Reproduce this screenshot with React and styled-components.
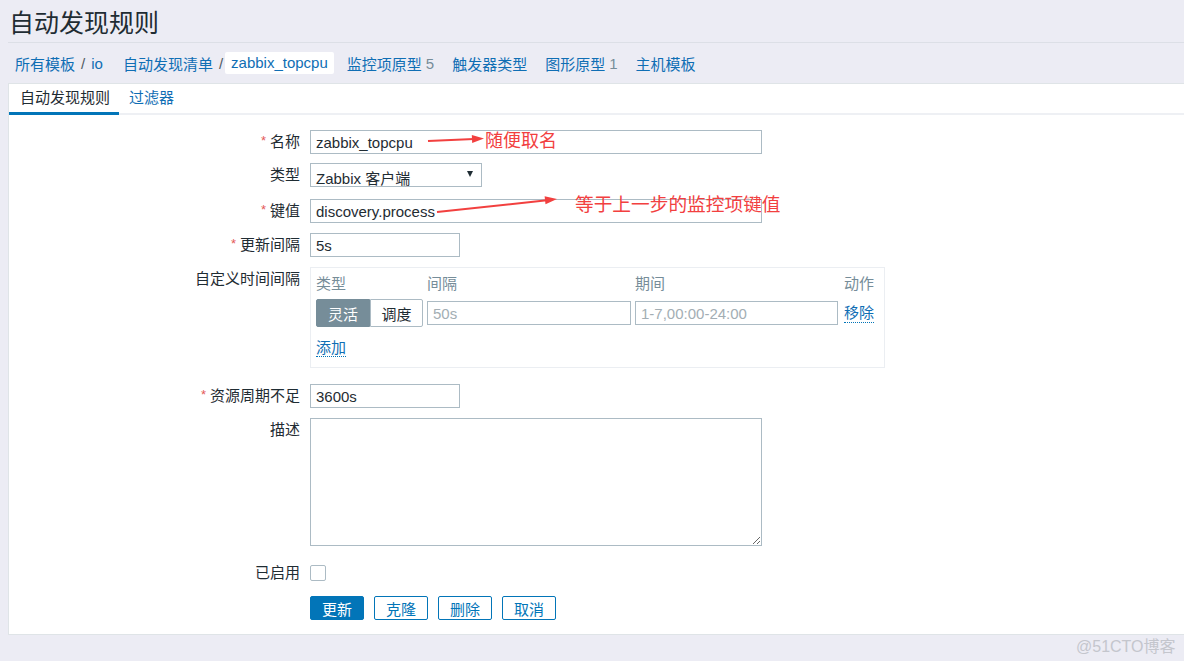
import React from "react";
import styled, { createGlobalStyle } from "styled-components";

const GlobalStyle = createGlobalStyle`
	html, body {
		margin: 0;
		padding: 0;
	}
	body {
		background: #ececf4;
		color: #1f2c33;
		font-family: "Liberation Sans", Arial, "Noto Sans CJK SC", sans-serif;
		font-size: 15px;
	}
`;

const Page = styled.div`
	box-sizing: border-box;
	height: 661px;
	overflow: hidden;
	padding-left: 8px;
	position: relative;
	width: 1184px;
`;

const Header = styled.header`
	align-items: center;
	border-bottom: 1px solid #dcdfe6;
	display: flex;
	height: 42px;
	padding-left: 1px;
`;

const Title = styled.h1`
	font-size: 25px;
	font-weight: normal;
	margin: 0;
`;

const Crumbs = styled.nav`
	align-items: center;
	display: flex;
	height: 40px;
	padding-left: 7px;
`;

const CrumbGroup = styled.div`
	align-items: center;
	display: flex;
	margin-right: ${({ $gap }) => $gap ?? 18}px;
`;

const CrumbLink = styled.a`
	color: #0f6eb4;
	cursor: pointer;
	text-decoration: none;
`;

const CrumbCurrent = styled.span`
	background: #ffffff;
	border-radius: 2px;
	color: #0f6eb4;
	height: 22px;
	line-height: 22px;
	padding: 0 6px;
`;

const Sep = styled.span`
	color: #4f5b62;
	padding: 0 ${({ $right }) => $right ?? 6}px 0 6px;
`;

const Count = styled.span`
	color: #768d99;
	margin-left: 4px;
`;

const Panel = styled.section`
	background: #ffffff;
	border: 1px solid #dfe4e7;
	border-right: none;
`;

const TabBar = styled.div`
	border-bottom: 2px solid #eef0f4;
	display: flex;
`;

const Tab = styled.div`
	border-bottom: 3px solid ${({ $active }) => ($active ? "#0275b8" : "transparent")};
	color: ${({ $active }) => ($active ? "#1f2c33" : "#0f6eb4")};
	height: 28px;
	line-height: 28px;
	margin-bottom: -2px;
	padding: ${({ $first }) => ($first ? "0 9px 0 11px" : "0 10px")};
`;

const Form = styled.div`
	padding: 15px 0 14px;
`;

const Row = styled.div`
	display: flex;
	margin-top: ${({ $mt }) => $mt ?? 10}px;
`;

const Label = styled.div`
	box-sizing: border-box;
	flex: 0 0 301px;
	height: 24px;
	line-height: 24px;
	padding-right: 10px;
	text-align: right;
	white-space: nowrap;
`;

const Asterisk = styled.span`
	color: #e45959;
	font-size: 13px;
	margin-right: 4px;
	position: relative;
	top: -2px;
`;

const Field = styled.div`
	align-items: center;
	display: flex;
	height: ${({ $h }) => $h ?? 24}px;
`;

const Input = styled.input`
	background: #ffffff;
	border: 1px solid #acbbc4;
	border-radius: 0;
	box-sizing: border-box;
	color: #1f2c33;
	font-family: inherit;
	font-size: 15px;
	height: 24px;
	margin: 0;
	outline: none;
	padding: 0 5px;
	width: ${({ $w }) => $w}px;

	&::placeholder {
		color: #a3aeb4;
	}
`;

const Select = styled.div`
	align-items: flex-start;
	background: #ffffff;
	border: 1px solid #acbbc4;
	box-sizing: border-box;
	display: flex;
	height: 24px;
	justify-content: space-between;
	overflow: hidden;
	padding: 0 8px 0 5px;
	width: 172px;
`;

const SelectText = styled.span`
	line-height: 20px;
	padding-top: 5px;
`;

const Caret = styled.span`
	border-left: 3.5px solid transparent;
	border-right: 3.5px solid transparent;
	border-top: 6px solid #1f2c33;
	height: 0;
	margin-top: 7px;
	width: 0;
`;

const Textarea = styled.textarea`
	border: 1px solid #acbbc4;
	border-radius: 0;
	box-sizing: border-box;
	display: block;
	font-family: inherit;
	font-size: 15px;
	height: 128px;
	margin: 0;
	outline: none;
	padding: 3px 5px;
	resize: both;
	width: 452px;
`;

const IntervalBox = styled.div`
	border: 1px solid #ebeef2;
	box-sizing: border-box;
	height: 101px;
	padding: 5px 5px 0;
	width: 575px;
`;

const IntervalGrid = styled.div`
	align-items: center;
	display: grid;
	grid-template-columns: 107px 204px 203px auto;
	grid-template-rows: 22px 28px;
	column-gap: 4px;
	row-gap: 4px;
`;

const ColHead = styled.div`
	color: #768d99;
	height: 22px;
	line-height: 22px;
	padding-left: ${({ $pl }) => $pl ?? 0}px;
`;

const Segmented = styled.div`
	display: flex;
	height: 28px;
`;

const Segment = styled.div`
	align-items: center;
	background: ${({ $active }) => ($active ? "#768d99" : "#ffffff")};
	border: 1px solid ${({ $active }) => ($active ? "#768d99" : "#acbbc4")};
	border-radius: ${({ $first }) => ($first ? "2px 0 0 2px" : "0 2px 2px 0")};
	box-sizing: border-box;
	color: ${({ $active }) => ($active ? "#ffffff" : "#1f2c33")};
	display: flex;
	justify-content: center;
	width: ${({ $w }) => $w}px;
`;

const DottedLink = styled.a`
	border-bottom: 1px dotted #0275b8;
	color: #0f6eb4;
	cursor: pointer;
	justify-self: start;
	line-height: 19px;
	margin-left: ${({ $ml }) => $ml ?? 0}px;
`;

const AddRow = styled.div`
	height: 22px;
	line-height: 22px;
	margin-top: 10px;
`;

const Checkbox = styled.span`
	border: 1px solid #acbbc4;
	border-radius: 2px;
	box-sizing: border-box;
	display: block;
	height: 16px;
	width: 16px;
`;

const Buttons = styled.div`
	display: flex;
	gap: 10px;
`;

const Button = styled.button`
	background: ${({ $primary }) => ($primary ? "#0275b8" : "#ffffff")};
	border: 1px solid #0275b8;
	border-radius: 2px;
	box-sizing: border-box;
	color: ${({ $primary }) => ($primary ? "#ffffff" : "#0275b8")};
	font-family: inherit;
	font-size: 15px;
	height: 24px;
	padding: 0;
	width: 54px;
`;

// red hand-drawn notes laid over the screenshot
const Arrows = styled.svg`
	left: 0;
	pointer-events: none;
	position: absolute;
	top: 0;
`;

const Note = styled.span`
	color: #f2403f;
	font-family: "Noto Sans CJK SC", sans-serif;
	font-size: ${({ $size }) => $size}px;
	left: ${({ $x }) => $x}px;
	line-height: 1;
	position: absolute;
	top: ${({ $y }) => $y}px;
	white-space: nowrap;
`;

const Watermark = styled.span`
	color: #c4c6cd;
	font-size: 16px;
	left: 1076px;
	position: absolute;
	top: 633px;
`;

const App = () => {
	return (
		<>
			<GlobalStyle />
			<Page>
				<Header>
					<Title>自动发现规则</Title>
				</Header>
				<Crumbs>
					<CrumbGroup $gap={20}>
						<CrumbLink>所有模板</CrumbLink>
						<Sep>/</Sep>
						<CrumbLink>io</CrumbLink>
					</CrumbGroup>
					<CrumbGroup $gap={13}>
						<CrumbLink>自动发现清单</CrumbLink>
						<Sep $right={2}>/</Sep>
						<CrumbCurrent>zabbix_topcpu</CrumbCurrent>
					</CrumbGroup>
					<CrumbGroup>
						<CrumbLink>监控项原型</CrumbLink>
						<Count>5</Count>
					</CrumbGroup>
					<CrumbGroup>
						<CrumbLink>触发器类型</CrumbLink>
					</CrumbGroup>
					<CrumbGroup>
						<CrumbLink>图形原型</CrumbLink>
						<Count>1</Count>
					</CrumbGroup>
					<CrumbGroup>
						<CrumbLink>主机模板</CrumbLink>
					</CrumbGroup>
				</Crumbs>
				<Panel>
					<TabBar>
						<Tab $active $first>
							自动发现规则
						</Tab>
						<Tab>过滤器</Tab>
					</TabBar>
					<Form>
						<Row $mt={0}>
							<Label>
								<Asterisk>*</Asterisk>名称
							</Label>
							<Field>
								<Input $w={452} defaultValue='zabbix_topcpu' />
							</Field>
						</Row>
						<Row $mt={9}>
							<Label>类型</Label>
							<Field>
								<Select>
									<SelectText>Zabbix 客户端</SelectText>
									<Caret />
								</Select>
							</Field>
						</Row>
						<Row $mt={12}>
							<Label>
								<Asterisk>*</Asterisk>键值
							</Label>
							<Field>
								<Input $w={452} defaultValue='discovery.process' />
							</Field>
						</Row>
						<Row $mt={10}>
							<Label>
								<Asterisk>*</Asterisk>更新间隔
							</Label>
							<Field>
								<Input $w={150} defaultValue='5s' />
							</Field>
						</Row>
						<Row $mt={10}>
							<Label>自定义时间间隔</Label>
							<IntervalBox>
								<IntervalGrid>
									<ColHead>类型</ColHead>
									<ColHead>间隔</ColHead>
									<ColHead>期间</ColHead>
									<ColHead $pl={2}>动作</ColHead>
									<Segmented>
										<Segment $active $first $w={54}>
											灵活
										</Segment>
										<Segment $w={53}>调度</Segment>
									</Segmented>
									<Input $w={204} placeholder='50s' />
									<Input $w={203} placeholder='1-7,00:00-24:00' />
									<DottedLink $ml={2}>移除</DottedLink>
								</IntervalGrid>
								<AddRow>
									<DottedLink>添加</DottedLink>
								</AddRow>
							</IntervalBox>
						</Row>
						<Row $mt={16}>
							<Label>
								<Asterisk>*</Asterisk>资源周期不足
							</Label>
							<Field>
								<Input $w={150} defaultValue='3600s' />
							</Field>
						</Row>
						<Row $mt={10}>
							<Label>描述</Label>
							<Textarea />
						</Row>
						<Row $mt={15}>
							<Label>已启用</Label>
							<Field>
								<Checkbox />
							</Field>
						</Row>
						<Row $mt={11}>
							<Label />
							<Buttons>
								<Button $primary>更新</Button>
								<Button>克隆</Button>
								<Button>删除</Button>
								<Button>取消</Button>
							</Buttons>
						</Row>
					</Form>
				</Panel>

				<Arrows width='1184' height='661' viewBox='0 0 1184 661'>
					<line x1='428' y1='141' x2='474' y2='139' stroke='#f2403f' strokeWidth='2' />
					<polygon points='484,138.5 472.2,143 471.8,135' fill='#f2403f' />
					<line x1='437' y1='212' x2='547' y2='200.2' stroke='#f2403f' strokeWidth='2' />
					<polygon points='557,199 545.5,204.3 544.6,196.3' fill='#f2403f' />
				</Arrows>
				<Note $x={485} $y={130} $size={18}>
					随便取名
				</Note>
				<Note $x={575} $y={194} $size={18.7}>
					等于上一步的监控项键值
				</Note>
				<Watermark>@51CTO博客</Watermark>
			</Page>
		</>
	);
};

export default App;
